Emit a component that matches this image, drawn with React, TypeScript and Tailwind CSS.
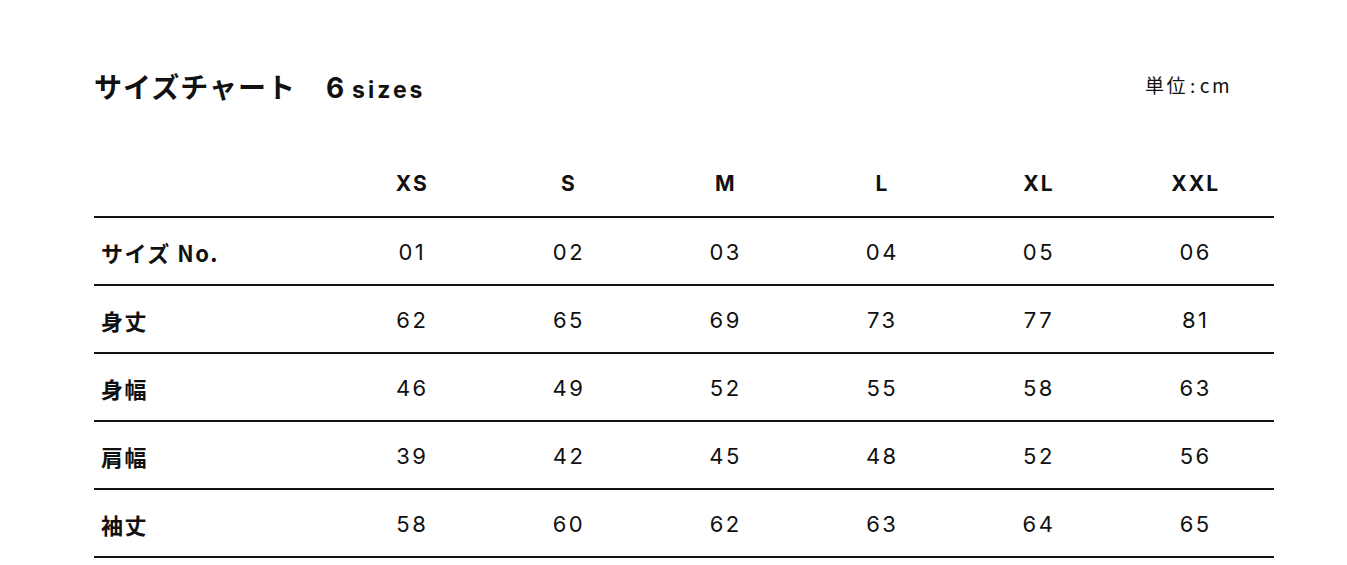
const SIZES = ["XS", "S", "M", "L", "XL", "XXL"];

const ROWS = [
  { label: "サイズ No.", values: ["01", "02", "03", "04", "05", "06"] },
  { label: "身丈", values: ["62", "65", "69", "73", "77", "81"] },
  { label: "身幅", values: ["46", "49", "52", "55", "58", "63"] },
  { label: "肩幅", values: ["39", "42", "45", "48", "52", "56"] },
  { label: "袖丈", values: ["58", "60", "62", "63", "64", "65"] },
];

export default function App() {
  return (
    <div className="w-[1347px] h-[565px] bg-white text-[#111] font-['Noto_Sans_CJK_JP',_'Noto_Sans',sans-serif] overflow-hidden">
      <div className="w-[1180px] ml-[94px] pt-[58px]">
        {/* Title */}
        <div className="flex items-end justify-between h-[44px]">
          <h1 className="flex items-baseline font-bold leading-none">
            <span className="text-[28px] tracking-[1px]">サイズチャート</span>
            <span className="ml-[30px] text-[28px] font-['Inter',sans-serif]">6</span>
            <span className="ml-[8px] text-[23px] tracking-[3px] font-['Inter',sans-serif]">sizes</span>
          </h1>
          <span className="mr-[42px] mb-[8px] text-[19px] tracking-[2.5px] leading-none">
            単位<span className="mx-[2px]">:</span>cm
          </span>
        </div>

        {/* Table */}
        <div className="mt-[50px]">
          <div className="grid grid-cols-[240px_repeat(6,1fr)] h-[66px] items-center border-b-2 border-[#111]">
            <div />
            {SIZES.map((s) => (
              <div key={s} className="text-center text-[21px] font-bold tracking-[2px] font-['Inter',sans-serif]">
                {s}
              </div>
            ))}
          </div>
          {ROWS.map((row) => (
            <div
              key={row.label}
              className="grid grid-cols-[240px_repeat(6,1fr)] h-[68px] items-center border-b-2 border-[#111] pt-[3px]"
            >
              <div className="pl-[7px] text-[22px] font-bold tracking-[1.5px]">{row.label}</div>
              {row.values.map((v, i) => (
                <div key={i} className="text-center text-[22px] tracking-[2.5px] font-['Inter',sans-serif]">
                  {v}
                </div>
              ))}
            </div>
          ))}
        </div>
      </div>
    </div>
  );
}
